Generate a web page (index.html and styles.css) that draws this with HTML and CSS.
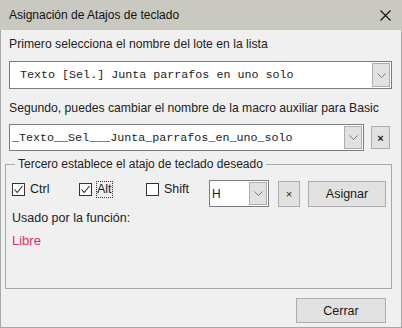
FILE: index.html
```html
<!DOCTYPE html>
<html lang="es">
<head>
  <meta charset="UTF-8">
  <title>Asignación de Atajos de teclado</title>
  <link rel="stylesheet" href="styles.css">
</head>
<body>

  <div class="window">
    <div class="titlebar">
      <span class="title">Asignación de Atajos de teclado</span>
      <svg class="close" width="11" height="11" viewBox="0 0 11 11">
        <path d="M0.5 0.5 L10.5 10.5 M10.5 0.5 L0.5 10.5" stroke="#111" stroke-width="1.1" fill="none"/>
      </svg>
    </div>

    <div class="content">
      <div class="label first">Primero selecciona el nombre del lote en la lista</div>

      <div class="combo big">
        <span class="combo-text mono pad">Texto [Sel.] Junta parrafos en uno solo</span>
        <span class="drop">
          <svg width="9" height="5" viewBox="0 0 9 5"><path d="M0.5 0.5 L4.5 4.5 L8.5 0.5" stroke="#777" fill="none"/></svg>
        </span>
      </div>

      <div class="label second">Segundo, puedes cambiar el nombre de la macro auxiliar para Basic</div>

      <div class="macro-row">
        <div class="combo macro">
          <span class="combo-text mono">_Texto__Sel___Junta_parrafos_en_uno_solo</span>
          <span class="drop">
            <svg width="9" height="5" viewBox="0 0 9 5"><path d="M0.5 0.5 L4.5 4.5 L8.5 0.5" stroke="#777" fill="none"/></svg>
          </span>
        </div>
        <button class="btn small-x bold-x">&#215;</button>
      </div>

      <div class="group">
        <span class="group-title">Tercero establece el atajo de teclado deseado</span>

        <div class="keys">
          <label class="check ctrl">
            <span class="box checked">
              <svg width="11" height="11" viewBox="0 0 11 11"><path d="M1.5 5.5 L4.2 8.5 L9.5 2" stroke="#222" stroke-width="1.1" fill="none"/></svg>
            </span>
            Ctrl
          </label>
          <label class="check alt">
            <span class="box checked">
              <svg width="11" height="11" viewBox="0 0 11 11"><path d="M1.5 5.5 L4.2 8.5 L9.5 2" stroke="#222" stroke-width="1.1" fill="none"/></svg>
            </span>
            <span class="focus">Alt</span>
          </label>
          <label class="check shift">
            <span class="box"></span>
            Shift
          </label>

          <div class="combo key">
            <span class="combo-text">H</span>
            <span class="drop">
              <svg width="9" height="5" viewBox="0 0 9 5"><path d="M0.5 0.5 L4.5 4.5 L8.5 0.5" stroke="#777" fill="none"/></svg>
            </span>
          </div>
          <button class="btn key-x">&#215;</button>
          <button class="btn assign">Asignar</button>
        </div>

        <div class="used">Usado por la función:</div>
        <div class="free">Libre</div>
      </div>

      <div class="footer">
        <button class="btn close-btn">Cerrar</button>
      </div>
    </div>
  </div>

</body>
</html>
```

FILE: styles.css
```css
body {
  margin: 0;
  font-family: "Liberation Sans", Arial, sans-serif;
  font-size: 12.2px;
  color: #1a1a1a;
  background-color: #f0f0f0;
}

.window {
  width: 402px;
  height: 328px;
  display: flex;
  flex-direction: column;
}

.titlebar {
  height: 30px;
  flex: none;
  background-color: #c9c9c1;
  display: flex;
  align-items: center;
  justify-content: space-between;
  padding: 0 11px 0 9px;
}

.title {
  font-size: 12px;
  color: #111;
}

.content {
  flex: 1;
  background-color: #f0f0f0;
  border: 1px solid #a8a8a8;
  border-top: none;
  padding: 0 9px 0 8px;
}

.label {
  line-height: 15px;
  color: #222;
}

.label.first {
  margin-top: 7px;
}

.label.second {
  margin-top: 12px;
}

.combo {
  display: flex;
  align-items: stretch;
  background-color: #fff;
  border: 1px solid #7d7d7d;
  box-sizing: border-box;
}

.combo.big {
  height: 28px;
  margin-top: 9px;
}

.combo-text {
  flex: 1;
  display: flex;
  align-items: center;
  padding-left: 2px;
  white-space: nowrap;
  overflow: hidden;
}

.mono {
  font-family: "Liberation Mono", "Courier New", monospace;
  font-size: 11.7px;
  color: #222;
}

.combo-text.pad {
  padding-left: 10px;
}

.drop {
  width: 16px;
  margin: 1px;
  flex: none;
  background-color: #e1e1e1;
  border: 1px solid #adadad;
  display: flex;
  align-items: center;
  justify-content: center;
}

.macro-row {
  display: flex;
  align-items: center;
  margin-top: 8px;
}

.combo.macro {
  width: 355px;
  height: 27px;
}

.btn {
  font-family: "Liberation Sans", Arial, sans-serif;
  font-size: 12px;
  color: #1a1a1a;
  background-color: #e1e1e1;
  border: 1px solid #adadad;
  padding: 0;
  box-sizing: border-box;
}

.small-x {
  width: 19px;
  height: 23px;
  margin-left: 7px;
  font-size: 11px;
}

.bold-x {
  font-weight: bold;
}

.group {
  position: relative;
  height: 125px;
  box-sizing: border-box;
  margin: 13px 0 0 -4px;
  border: 1px solid #a8a8a8;
  padding: 15px 0 0 6px;
}

.group-title {
  position: absolute;
  top: -8px;
  left: 9px;
  padding: 0 3px;
  line-height: 15px;
  font-size: 12px;
  background-color: #f0f0f0;
  color: #222;
}

.keys {
  display: flex;
  align-items: flex-start;
}

.check {
  display: flex;
  align-items: center;
  gap: 5px;
  margin-top: 2px;
  line-height: 15px;
  font-size: 12.5px;
}

.check.ctrl,
.check.alt {
  width: 67px;
}

.check.shift {
  width: 63px;
}

.box {
  width: 13px;
  height: 13px;
  box-sizing: border-box;
  border: 1px solid #333;
  background-color: #fff;
  display: flex;
  align-items: center;
  justify-content: center;
}

.focus {
  outline: 1px dotted #333;
  outline-offset: 0;
}

.combo.key {
  width: 60px;
  height: 27px;
}

.combo.key .combo-text {
  font-size: 12px;
}

.key-x {
  width: 22px;
  height: 26px;
  margin-left: 9px;
  margin-top: 1px;
  font-size: 11px;
}

.assign {
  width: 78px;
  height: 26px;
  margin-left: 8px;
  margin-top: 1px;
  font-size: 12.5px;
}

.used {
  margin-top: 4px;
  line-height: 15px;
  font-size: 12.5px;
  color: #222;
}

.free {
  margin-top: 7px;
  line-height: 15px;
  font-size: 13px;
  color: #d9316b;
}

.footer {
  display: flex;
  justify-content: flex-end;
  margin-top: 9px;
  padding-right: 6px;
}

.close-btn {
  width: 90px;
  height: 25px;
  font-size: 12.5px;
}
```
